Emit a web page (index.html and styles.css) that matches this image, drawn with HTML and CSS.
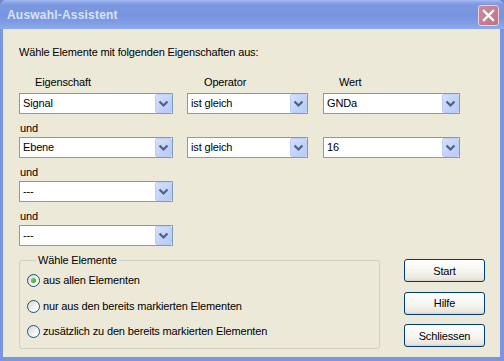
FILE: index.html
```html
<!DOCTYPE html>
<html lang="de">
<head>
    <meta charset="UTF-8">
    <title>Auswahl-Assistent</title>
    <link rel="stylesheet" href="styles.css">
</head>
<body>
    <div class="window">
        <div class="titlebar">
            <span class="title">Auswahl-Assistent</span>
            <span class="close-btn">
                <svg width="21" height="21" viewBox="0 0 21 21"><path d="M6 6 L15 15 M15 6 L6 15" stroke="#fff" stroke-width="2.4" stroke-linecap="square"/></svg>
            </span>
        </div>

        <div class="dialog">
            <p class="intro">Wähle Elemente mit folgenden Eigenschaften aus:</p>

            <div class="row labels">
                <span class="w-prop">Eigenschaft</span>
                <span class="w-op">Operator</span>
                <span class="w-val">Wert</span>
            </div>

            <div class="row">
                <div class="combo w-prop"><span class="combo-text">Signal</span><span class="combo-btn"></span></div>
                <div class="combo w-op"><span class="combo-text">ist gleich</span><span class="combo-btn"></span></div>
                <div class="combo w-val"><span class="combo-text">GNDa</span><span class="combo-btn"></span></div>
            </div>

            <p class="und">und</p>
            <div class="row">
                <div class="combo w-prop"><span class="combo-text">Ebene</span><span class="combo-btn"></span></div>
                <div class="combo w-op"><span class="combo-text">ist gleich</span><span class="combo-btn"></span></div>
                <div class="combo w-val"><span class="combo-text">16</span><span class="combo-btn"></span></div>
            </div>

            <p class="und">und</p>
            <div class="row">
                <div class="combo w-prop"><span class="combo-text">---</span><span class="combo-btn"></span></div>
            </div>

            <p class="und">und</p>
            <div class="row">
                <div class="combo w-prop"><span class="combo-text">---</span><span class="combo-btn"></span></div>
            </div>

            <div class="bottom">
                <fieldset class="group">
                    <legend>Wähle Elemente</legend>
                    <div class="radio-row"><span class="radio checked"></span>aus allen Elementen</div>
                    <div class="radio-row"><span class="radio"></span>nur aus den bereits markierten Elementen</div>
                    <div class="radio-row"><span class="radio"></span>zusätzlich zu den bereits markierten Elementen</div>
                </fieldset>

                <div class="buttons">
                    <button class="btn">Start</button>
                    <button class="btn">Hilfe</button>
                    <button class="btn">Schliessen</button>
                </div>
            </div>
        </div>
    </div>
</body>
</html>
```

FILE: styles.css
```css
:root {
    --face: #ece9d8;
    --frame: #7a96df;
    --combo-border: #7f9db9;
    --group-border: #d0d0bf;
}

* {
    margin: 0;
    padding: 0;
    box-sizing: border-box;
}

html, body {
    width: 504px;
    height: 361px;
    overflow: hidden;
    background: #6f86c8;
}

body {
    font-family: "Liberation Sans", Arial, sans-serif;
    font-size: 11px;
    line-height: 13px;
    letter-spacing: -0.15px;
    color: #000;
}

.window {
    width: 504px;
    height: 361px;
    display: flex;
    flex-direction: column;
    background: var(--frame);
    border-radius: 6px 6px 0 0;
}

.titlebar {
    height: 29px;
    flex-shrink: 0;
    display: flex;
    align-items: center;
    padding: 0 5px 0 7px;
    border-radius: 6px 6px 0 0;
    background: linear-gradient(to bottom, #a9bdf2 0, #8ea8ec 2px, #7b97e0 5px, #7894de 55%, #809de6 80%, #8dabef 100%);
}

.title {
    font-weight: bold;
    font-size: 12px;
    color: #d8e4f8;
    letter-spacing: 0.2px;
    margin-top: 2px;
}

.close-btn {
    margin-left: auto;
    width: 21px;
    height: 21px;
    margin-top: 1px;
    border-radius: 3px;
    border: 1px solid #e8d3dc;
    background: linear-gradient(to bottom right, #d08a9c, #bd7287);
    display: flex;
    align-items: center;
    justify-content: center;
}

.close-btn svg {
    display: block;
    margin: -1px;
}

.dialog {
    flex: 1;
    background: var(--face);
    margin: 0 4px 4px 3px;
    padding: 17px 0 0 16px;
}

.intro {
    margin-bottom: 17px;
}

.row {
    display: flex;
    gap: 14px;
}

.w-prop { width: 154px; }
.w-op { width: 121px; }
.w-val { width: 137px; margin-left: 1px; }

.labels {
    margin-bottom: 4px;
}

.labels span {
    padding-left: 16px;
}

.labels .w-op {
    padding-left: 17px;
}

.combo {
    height: 21px;
    border: 1px solid var(--combo-border);
    background: #fff;
    display: flex;
    align-items: center;
}

.combo-text {
    flex: 1;
    padding-left: 3px;
}

.combo-btn {
    width: 17px;
    height: 19px;
    border-radius: 2px;
    border: 1px solid #bccdf4;
    background:
        url("data:image/svg+xml,%3Csvg xmlns='http://www.w3.org/2000/svg' width='15' height='17'%3E%3Cpath d='M3.5 6.5 L7.5 10.5 L11.5 6.5' fill='none' stroke='%234d6185' stroke-width='2.2'/%3E%3C/svg%3E") center no-repeat,
        linear-gradient(to bottom right, #d5e0fb, #b6c9f7);
}

.und {
    margin: 8px 0 2px 1px;
}

.bottom {
    display: flex;
    align-items: flex-start;
    gap: 24px;
    margin-top: 8px;
}

.group {
    width: 361px;
    border: 1px solid var(--group-border);
    border-radius: 3px;
    padding: 7px 0 10px 7px;
    display: flex;
    flex-direction: column;
    gap: 12.5px;
}

.group legend {
    margin-left: 9px;
    padding: 0 2px;
}

.radio-row {
    display: flex;
    align-items: center;
    gap: 3px;
    height: 13px;
}

.radio {
    width: 13px;
    height: 13px;
    border-radius: 50%;
    border: 1px solid #1c5180;
    background: linear-gradient(to bottom right, #d6d5cd, #fff 80%);
    display: flex;
    align-items: center;
    justify-content: center;
}

.radio.checked::after {
    content: "";
    width: 5px;
    height: 5px;
    border-radius: 50%;
    background: radial-gradient(circle at 35% 35%, #5fd35f, #21a121);
}

.buttons {
    display: flex;
    flex-direction: column;
    gap: 9.5px;
    margin-top: 5px;
}

.btn {
    width: 81px;
    height: 23px;
    font-family: inherit;
    font-size: 11px;
    letter-spacing: inherit;
    color: #000;
    border: 1px solid #003c74;
    border-radius: 3px;
    background: linear-gradient(to bottom, #fff 0, #f4f3ee 60%, #e9e6dc 90%, #d6d0c5 100%);
}
```
